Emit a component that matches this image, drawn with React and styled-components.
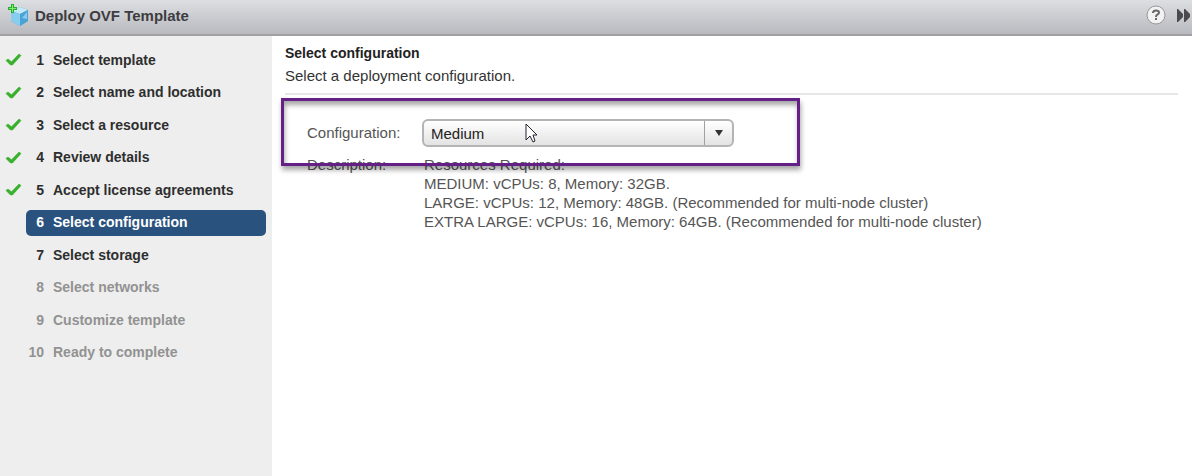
import React from "react";
import styled, { createGlobalStyle } from "styled-components";

const GlobalStyle = createGlobalStyle`
  * { box-sizing: border-box; }
  body {
    margin: 0;
    background: #fff;
    font-family: "Liberation Sans", Arial, sans-serif;
    font-size: 15px;
    line-height: 19px;
    color: #333;
  }
  button, select { font: inherit; }
`;

const Wizard = styled.div`
  min-height: 100vh;
  display: flex;
  flex-direction: column;
`;

const TitleBar = styled.header`
  display: flex;
  align-items: center;
  height: 36px;
  padding: 0 1px 4px 8px;
  background: linear-gradient(#dddee2, #b9babf);
  border-bottom: 2px solid #a0a0a3;
`;

const WizardTitle = styled.h1`
  flex: 1;
  margin: 0 0 0 6px;
  font-size: 15px;
  font-weight: bold;
  color: #3d3d3f;
`;

const IconButton = styled.button`
  display: flex;
  margin: 0 0 0 10px;
  padding: 0;
  border: 0;
  background: none;
`;

const Body = styled.div`
  flex: 1;
  display: flex;
`;

const Sidebar = styled.nav`
  flex: 0 0 272px;
  padding: 8px 6px 0 5px;
  background: #eee;
`;

const Steps = styled.ol`
  display: grid;
  grid-auto-rows: 1fr;
  height: 325px;
  margin: 0;
  padding: 0;
  list-style: none;
`;

const Step = styled.li`
  display: grid;
  grid-template-columns: 21px 1fr;
  align-items: center;
`;

const StepLink = styled.a`
  grid-column: 2;
  display: flex;
  align-items: center;
  gap: 9px;
  height: 26px;
  border-radius: 5px;
  font-size: 14px;
  font-weight: bold;
  text-decoration: none;
  white-space: nowrap;
  color: ${({ $state }) =>
    $state === "active" ? "#fff" : $state === "disabled" ? "#929292" : "#2e2e2e"};
  background: ${({ $state }) => ($state === "active" ? "#2a527e" : "transparent")};
`;

const StepNumber = styled.span`
  width: 18px;
  text-align: right;
`;

const Content = styled.main`
  flex: 1;
  min-width: 0;
  padding: 8px 14px 0 13px;
`;

const PageHeader = styled.div`
  padding-bottom: 8px;
  border-bottom: 2px solid #e6e6e6;
`;

const PageTitle = styled.h2`
  margin: 0 0 3px;
  font-size: 14px;
  font-weight: bold;
  color: #222;
`;

const PageText = styled.p`
  margin: 0;
`;

const Form = styled.form`
  position: relative;
  display: grid;
  grid-template-columns: 115px 1fr;
  row-gap: 8px;
  padding: 24px 0 0 22px;
  color: #555;
`;

const FieldLabel = styled.label`
  line-height: 28px;
`;

const SelectBox = styled.div`
  position: relative;
  width: 312px;
`;

const Select = styled.select`
  display: block;
  width: 100%;
  height: 28px;
  padding: 0 36px 0 7px;
  appearance: none;
  border: 2px solid #b4b4b4;
  border-radius: 6px;
  background: linear-gradient(#fff, #e3e3e3);
  color: #222;
`;

const SelectArrow = styled.span`
  position: absolute;
  top: 2px;
  right: 2px;
  bottom: 2px;
  width: 28px;
  display: flex;
  align-items: center;
  justify-content: center;
  border-left: 1px solid #a0a0a0;
  pointer-events: none;
`;

const Pointer = styled.svg`
  position: absolute;
  left: 103px;
  top: 4px;
  pointer-events: none;
`;

const Description = styled.div`
  padding-left: 2px;
`;

const Highlight = styled.div`
  position: absolute;
  top: 3px;
  left: -4px;
  width: 519px;
  height: 68px;
  border: 3px solid #652088;
  box-shadow: 1px 4px 5px rgba(0, 0, 0, 0.35), inset 1px 4px 5px rgba(0, 0, 0, 0.35);
  pointer-events: none;
`;

const CubeIcon = () => (
  <svg width="21" height="22" viewBox="0 0 21 22" aria-hidden="true">
    <path d="m3 7 9-4 8 3v11l-8 5-9-5z" fill="#4aa6d8" />
    <path d="m3 7 9-4 8 3-8 4z" fill="#c5e9f8" />
    <path d="m3 7 9 3v12l-9-5z" fill="#86cdee" />
    <path d="m12 10 8-4v11l-8 5z" fill="#4ba3d4" />
    <path d="m14 14 5-6v7z" fill="#86cbee" />
    <path d="M3 0h3v3h3v3H6v3H3V6H0V3h3z" fill="#2bad31" />
    <path d="M4 1h1v3h3v1H5v3H4V5H1V4h3z" fill="#7bf064" />
  </svg>
);

const CheckIcon = () => (
  <svg width="17" height="14" viewBox="0 0 17 14" role="img" aria-label="Completed">
    <path d="M1 7.500 3 6l3.500 2.800L14 1l2 1.600L7.500 12H5.500z" fill="#37b02c" stroke="#37b02c" strokeWidth=".6" strokeLinejoin="round" />
  </svg>
);

const HelpIcon = () => (
  <svg width="20" height="20" viewBox="0 0 20 20" aria-hidden="true">
    <circle cx="10" cy="10" r="9" fill="#f2f2f2" stroke="#98989a" />
    <path d="M7 8Q7 5.500 10 5.500t3 2q0 1.300-1.700 2.200Q10 10.400 10 12" fill="none" stroke="#666" strokeWidth="2" />
    <path d="M9 13h2v2H9z" fill="#666" />
  </svg>
);

const ForwardIcon = () => (
  <svg width="15" height="13" viewBox="0 0 15 13" aria-hidden="true">
    <path d="M1 0h1l5 5v3l-5 5H1zM8 0h1l5 5v3l-5 5H8z" fill="#4b4b4e" />
  </svg>
);

const steps = [
  ["Select template", "done"],
  ["Select name and location", "done"],
  ["Select a resource", "done"],
  ["Review details", "done"],
  ["Accept license agreements", "done"],
  ["Select configuration", "active"],
  ["Select storage", "next"],
  ["Select networks", "disabled"],
  ["Customize template", "disabled"],
  ["Ready to complete", "disabled"],
];

export default function App() {
  return (
    <Wizard>
      <GlobalStyle />
      <TitleBar>
        <CubeIcon />
        <WizardTitle>Deploy OVF Template</WizardTitle>
        <IconButton type="button" aria-label="Help"><HelpIcon /></IconButton>
        <IconButton type="button" aria-label="Expand"><ForwardIcon /></IconButton>
      </TitleBar>
      <Body>
        <Sidebar aria-label="Steps">
          <Steps>
            {steps.map(([name, state], i) => (
              <Step key={name}>
                {state === "done" && <CheckIcon />}
                <StepLink
                  href={`#step-${i + 1}`}
                  $state={state}
                  aria-current={state === "active" ? "step" : undefined}
                  aria-disabled={state === "disabled" || undefined}
                >
                  <StepNumber>{i + 1}</StepNumber>
                  <span>{name}</span>
                </StepLink>
              </Step>
            ))}
          </Steps>
        </Sidebar>
        <Content>
          <PageHeader>
            <PageTitle>Select configuration</PageTitle>
            <PageText>Select a deployment configuration.</PageText>
          </PageHeader>
          <Form>
            <FieldLabel htmlFor="configuration">Configuration:</FieldLabel>
            <SelectBox>
              <Select id="configuration" defaultValue="Medium">
                <option>Medium</option>
                <option>Large</option>
                <option>Extra Large</option>
              </Select>
              <SelectArrow>
                <svg width="8" height="6" viewBox="0 0 8 6" aria-hidden="true">
                  <path d="M0 0h8L4 6z" fill="#333" />
                </svg>
              </SelectArrow>
              <Pointer width="13" height="21" viewBox="0 0 13 21" aria-hidden="true">
                <path d="M1 1v16l4-4 3 6 2-1-2-6h4z" fill="#fff" stroke="#222233" />
              </Pointer>
            </SelectBox>
            <div>Description:</div>
            <Description>
              <div>Resources Required:</div>
              <div>MEDIUM: vCPUs: 8, Memory: 32GB.</div>
              <div>LARGE: vCPUs: 12, Memory: 48GB. (Recommended for multi-node cluster)</div>
              <div>EXTRA LARGE: vCPUs: 16, Memory: 64GB. (Recommended for multi-node cluster)</div>
            </Description>
            <Highlight />
          </Form>
        </Content>
      </Body>
    </Wizard>
  );
}
